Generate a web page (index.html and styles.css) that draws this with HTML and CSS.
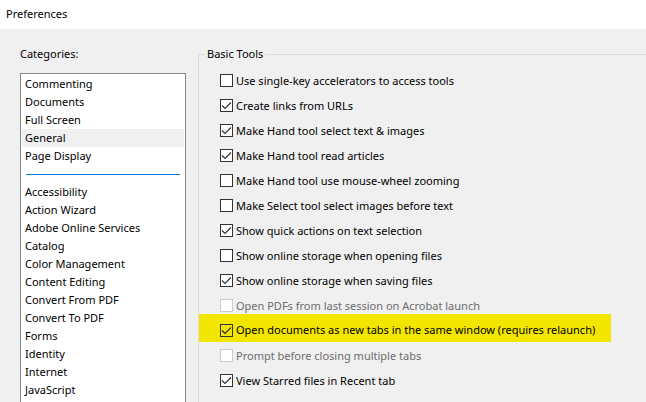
FILE: index.html
```
<!DOCTYPE html>
<html lang="en">
<head>
    <meta charset="UTF-8">
    <title>Preferences</title>
    <link rel="stylesheet" href="styles.css">
</head>
<body>
    <header class="titlebar">
        <h1>Preferences</h1>
    </header>

    <main class="content">
        <div class="sidebar">
            <label for="categories">Categories:</label>
            <select id="categories" class="categories" size="18">
                <option>Commenting</option>
                <option>Documents</option>
                <option>Full Screen</option>
                <option selected>General</option>
                <option>Page Display</option>
                <option class="separator" disabled></option>
                <option>Accessibility</option>
                <option>Action Wizard</option>
                <option>Adobe Online Services</option>
                <option>Catalog</option>
                <option>Color Management</option>
                <option>Content Editing</option>
                <option>Convert From PDF</option>
                <option>Convert To PDF</option>
                <option>Forms</option>
                <option>Identity</option>
                <option>Internet</option>
                <option>JavaScript</option>
            </select>
        </div>

        <fieldset class="group">
            <legend>Basic Tools</legend>
            <label class="option"><input type="checkbox">Use single-key accelerators to access tools</label>
            <label class="option"><input type="checkbox" checked>Create links from URLs</label>
            <label class="option"><input type="checkbox" checked>Make Hand tool select text &amp; images</label>
            <label class="option"><input type="checkbox" checked>Make Hand tool read articles</label>
            <label class="option"><input type="checkbox">Make Hand tool use mouse-wheel zooming</label>
            <label class="option"><input type="checkbox">Make Select tool select images before text</label>
            <label class="option"><input type="checkbox" checked>Show quick actions on text selection</label>
            <label class="option"><input type="checkbox">Show online storage when opening files</label>
            <label class="option"><input type="checkbox" checked>Show online storage when saving files</label>
            <label class="option disabled"><input type="checkbox" disabled>Open PDFs from last session on Acrobat launch</label>
            <label class="option highlight"><input type="checkbox" checked>Open documents as new tabs in the same window (requires relaunch)</label>
            <label class="option disabled"><input type="checkbox" disabled>Prompt before closing multiple tabs</label>
            <label class="option"><input type="checkbox" checked>View Starred files in Recent tab</label>
        </fieldset>
    </main>
</body>
</html>
```

FILE: styles.css
```
* {
    box-sizing: border-box;
}

body {
    margin: 0;
    height: 100vh;
    display: flex;
    flex-direction: column;
    overflow: hidden;
    background-color: #f0f0f0;
    color: #000;
    font-family: "Noto Sans", "Open Sans", sans-serif;
    font-size: 11px;
    line-height: 18px;
}

.titlebar {
    flex: none;
    height: 29px;
    padding: 5px 6px;
    background-color: #fff;
}

.titlebar h1 {
    margin: 0;
    font-size: 11px;
    font-weight: normal;
}

.content {
    flex: 1;
    display: flex;
    gap: 12px;
    min-height: 0;
    padding: 16px 0 0 20px;
}

.sidebar {
    flex: none;
    width: 166px;
    display: flex;
    flex-direction: column;
    gap: 10px;
}

.categories {
    flex: 1;
    min-height: 0;
    padding: 1px;
    overflow: hidden;
    border: 1px solid #828790;
    border-bottom: none;
    border-radius: 0;
    outline: none;
    background-color: #fff;
    color: #000;
    font: inherit;
}

.categories option {
    height: 18px;
    min-height: 18px;
    padding: 1px 3px 0;
}

.categories option:checked {
    background: linear-gradient(#f0f0f0, #f0f0f0);
    color: #000;
}

.categories .separator {
    background: linear-gradient(#0078d7, #0078d7) 4px 9px / calc(100% - 8px) 1px no-repeat;
}

/* right and bottom edges run outside the window */
.group {
    flex: 1;
    min-width: 0;
    margin: 0;
    padding: 5px 0 0 6px;
    border: 1px solid #dcdcdc;
    border-width: 1px 0 0 1px;
}

.group legend {
    padding: 0 2px;
}

.option {
    display: flex;
    align-items: center;
    gap: 3px;
    width: max-content;
    height: 25px;
    padding-left: 15px;
}

.option input {
    appearance: none;
    flex: none;
    width: 13px;
    height: 13px;
    margin: 0;
    border: 1px solid #333;
    background-color: #fff;
}

.option input:checked {
    background-image: url("data:image/svg+xml,%3Csvg xmlns='http://www.w3.org/2000/svg' viewBox='0 0 11 11'%3E%3Cpath d='M1 5.5 4 8.5 10 2.5' fill='none' stroke='%23333' stroke-width='1.2'/%3E%3C/svg%3E");
}

.option.disabled {
    color: #6d6d6d;
}

.option.disabled input {
    border-color: #ccc;
}

.option.highlight {
    height: 28px;
    margin: -4px 0 1px -6px;
    padding: 4px 16px 0 21px;
    background-color: #f2e600;
}

.option.highlight input {
    background-color: transparent;
}
```
